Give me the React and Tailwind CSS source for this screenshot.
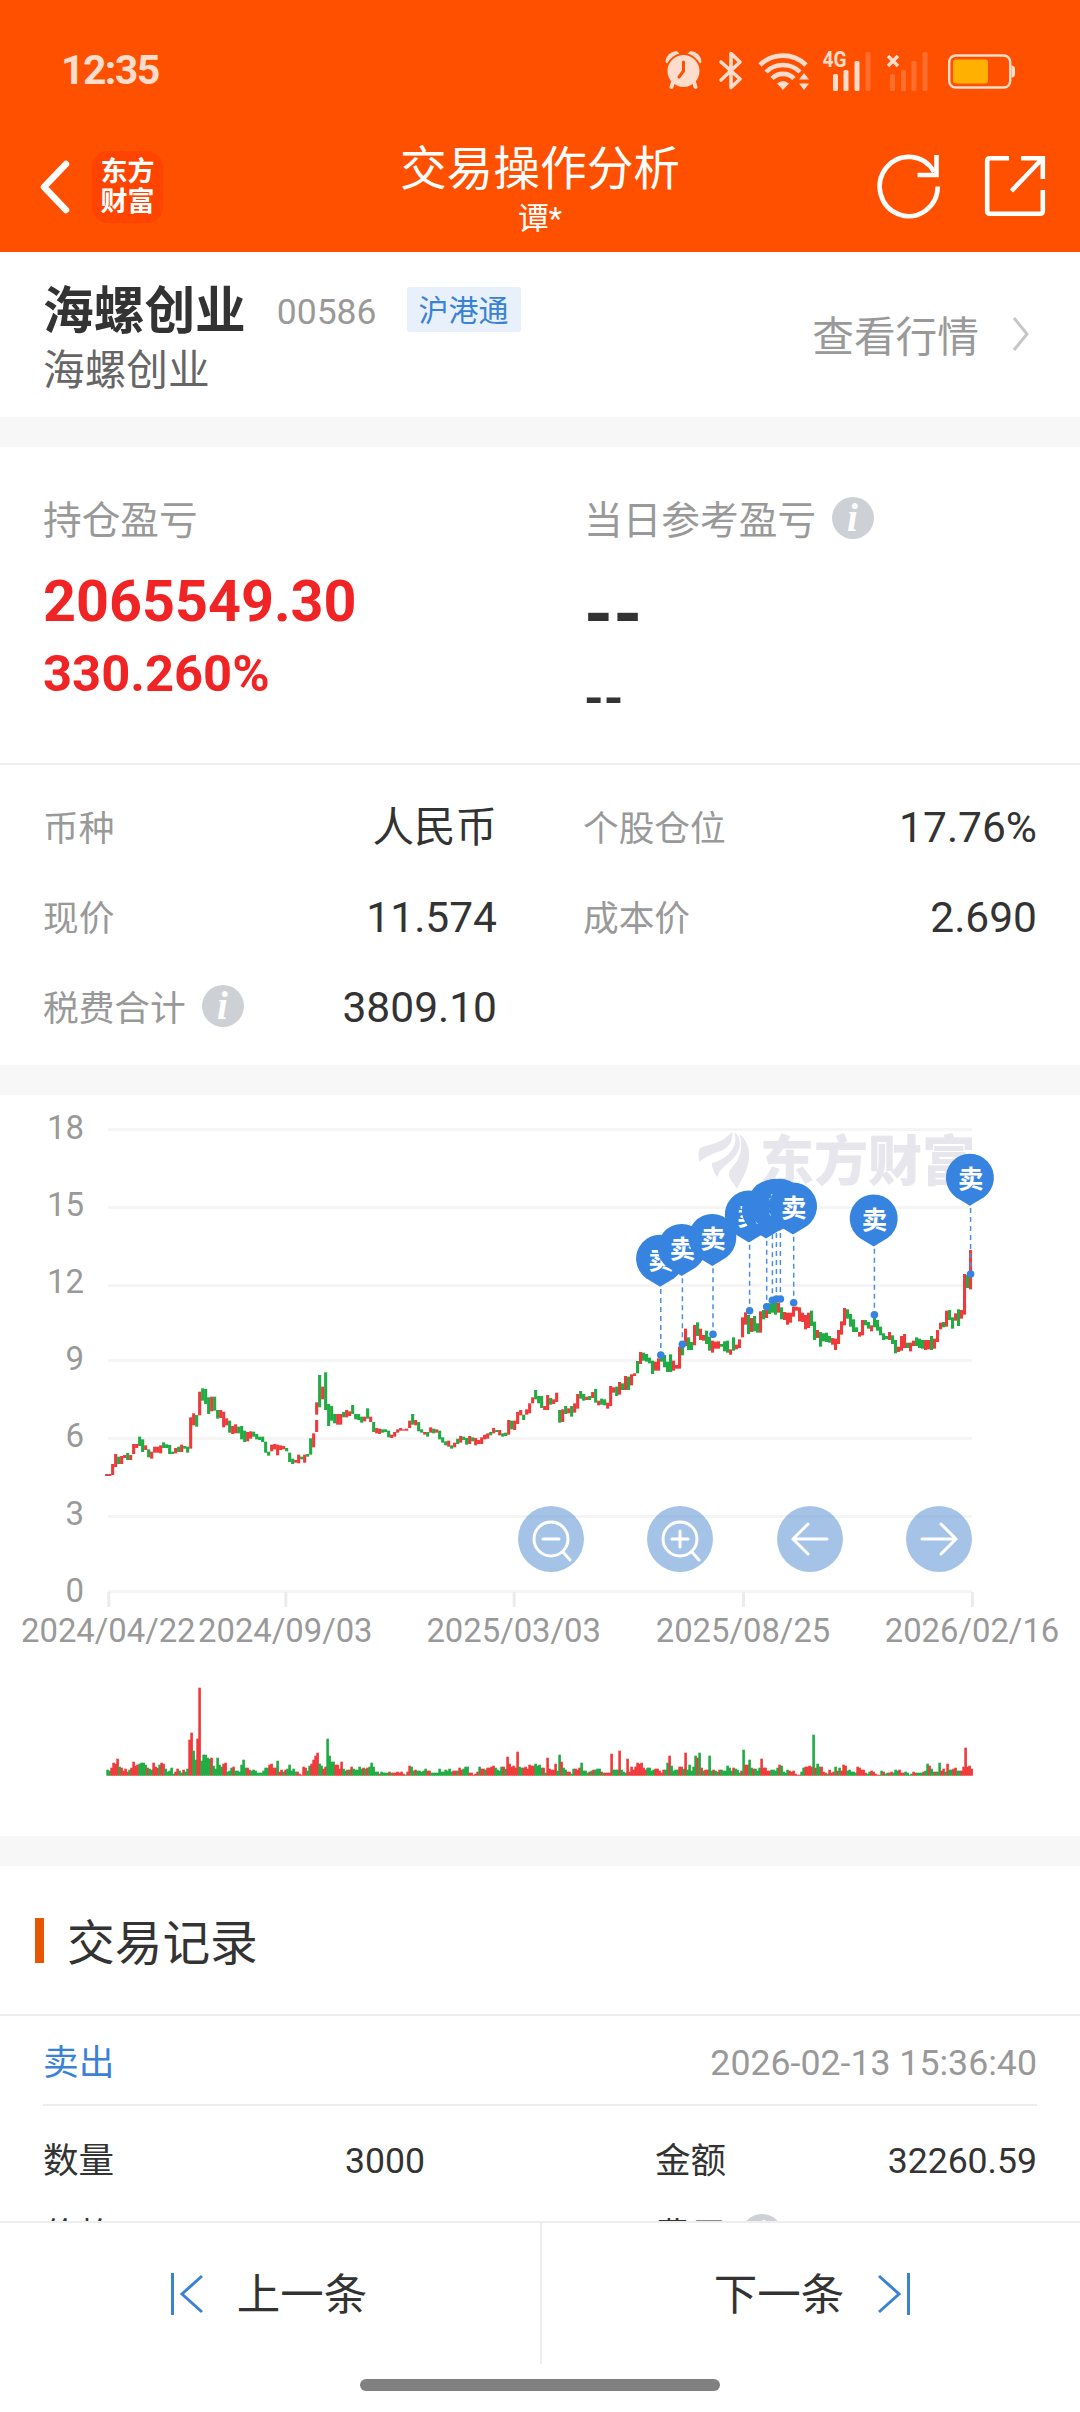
import React from "react";

const RED = "#ef3a3c";
const GREEN = "#20ab43";

/* Daily range bars, three units wide each: colour, top, bottom. */
const EARLY = `r1152-1158 r1152-1158 r1122-1155 r1092-1131 g1100-1122 r1098-1122 r1095-1104 g1089-1110 r1095-1110 r1062-1092
r1062-1074 g1040-1068 g1048-1086 r1066-1080 g1078-1102 r1085-1106 r1070-1088 r1070-1088 r1066-1090 g1057-1074
g1063-1074 g1065-1092 g1085-1092 r1074-1090 g1070-1086 r1064-1086 g1068-1076 g1070-1088 r982-1076 r970-1006
g975-1010 r905-976 g895-932 g897-942 g922-972 r920-964 g920-962 g960-986 r960-984 r965-1012
r985-1006 g992-1028 r1008-1032 r1003-1030 g1010-1030 g1008-1048 g1022-1056 r1026-1054 r1024-1046 g1025-1040
g1032-1048 g1040-1050 g1040-1056 g1055-1088 g1085-1097 r1064-1084 r1062-1078 r1064-1096 r1066-1080 r1068-1078
g1074-1084 g1088-1116 g1106-1122 r1110-1118 r1094-1120 g1100-1108 r1094-1118 g1092-1100 g1045-1094 r1030-1072
r937-974 g855-952 r890-928 g847-960 g942-1008 g948-992 g972-1000 r972-1004 r972-1004 g966-982
r960-982 r964-978 g945-972 g972-988 g972-990 g980-998 r980-994 g955-986 r980-996 g996-1026
r1014-1030 r1016-1032 g1018-1028 g1018-1026 g1022-1042 r1034-1044 r1026-1040 r1018-1028 r1014-1022 r1018-1022
r1016-1022 r992-1014 g972-1004 r990-1006 g996-1024 g1018-1028 r1026-1034 g1026-1040 r1012-1028 g1016-1030
r1018-1028 g1022-1048 g1042-1058 g1054-1066 r1052-1070 g1066-1076 r1058-1072 g1046-1062 r1038-1058 g1040-1050
g1044-1064 r1038-1062 g1042-1054 r1044-1066 r1050-1062 r1042-1062 r1034-1048 r1030-1046 g1026-1036 r1014-1030
g1020-1026 r1020-1036 g1030-1040 g1028-1038 r990-1034 g992-1018 r992-1020 r966-1002 r960-976 g974-990
r958-974 r940-970 r922-940 g900-928 g918-940 g918-954 r948-960 r915-960 g924-944 r928-942
r908-936 g960-998 r958-996 g948-972 r955-970 g948-980 r940-968 r912-956 g903-926 g912-932
r920-930 g918-930 r906-924 g897-938 r932-946 g926-944 g928-946 r938-956 r888-948 r892-908
g890-918`;

const LATE = `r876-914 g880-900 r858-900 g860-900 r853-886 r850-858 g813-850 r786-822 g788-812 g792-815
g803-820 g812-852 r815-842 r805-842 g795-815 g795-832 g815-846 g793-846 r812-842 r825-836
r770-836 g756-796 r716-768 g742-780 g756-780 r705-766 g697-738 r716-750 r735-752 g722-762
g740-782 r752-788 r755-776 r754-776 g762-770 g754-784 g752-788 r778-794 g742-782 r764-778
r748-774 r682-742 r667-704 g675-732 r684-726 g678-724 g700-728 r664-728 g660-688 r648-684
g640-672 g632-668 g630-674 r638-668 g652-688 r666-690 r668-704 r668-698 r650-680 r650-662
r652-694 r668-696 r675-718 r668-714 g662-708 g695-750 r720-744 g726-770 g730-754 g728-756
g738-758 r744-764 r746-780 r720-762 r694-734 r654-706 g658-686 g672-710 g688-726 g712-726
r726-740 r690-736 g690-706 g696-716 r706-724 g680-712 g690-722 g710-736 g730-750 g738-748
r726-750 g736-762 g750-790 r770-786 r738-782 r732-774 g758-774 r758-784 r752-768 g742-768
g746-774 g750-776 r750-780 r750-778 g738-780 r746-776 r720-756 r698-718 g696-712 r662-710
g660-690 g682-716 r670-692 g658-708 r660-686 r552-674 g555-594 r480-598`;

const VOLUME = `g6 g5 r8 r13 r12 r17 g9 r8 r5 r7 r4 g6 r8 r14 r10 r11 g12 g13 g13 g11 r8 g7 g6 r13 r9 r8 g11 r13 r12 g7
g4 g5 g8 g2 r4 r7 g5 g3 r6 g4 g7 r36 r43 g25 g16 r37 r88 g15 g21 g21 g18 g17 r18 g10 g7 g18 g11 g9 r12 r13
g4 g5 g8 r9 g5 g5 g4 g11 g16 g8 r8 r6 g5 g6 g5 g3 g3 g3 g5 g8 g8 r11 r12 r8 r8 g15 r4 r6 g4 r6
g7 g11 g5 g7 g4 r4 r2 r1 r9 r8 g5 g10 r12 r16 r20 r23 g12 g10 r7 r9 g37 g20 g14 g14 r11 r11 r7 r14 g7 g5
r6 g6 r9 g7 g6 g6 g9 g7 r8 g7 r8 g9 g13 g9 g4 g4 r2 g4 g3 g3 g3 r4 g3 r3 r3 r4 r3 r4 r2 g1
r4 r10 g9 g5 r6 g5 g5 g4 g5 g7 r5 r5 g3 g3 g3 g3 g7 g4 g4 g6 g5 g7 g4 r5 r5 g5 r8 r6 g7 g9
g9 r3 r3 r1 r2 r4 g9 r7 r7 g6 r8 r8 r9 r10 g8 g6 g5 g9 r9 g7 r19 r12 r9 r10 r8 r24 g9 g8 r8 r9
r7 r11 r10 r10 g12 g10 g11 g8 r8 g3 r18 r7 r6 r6 r12 g5 g21 r14 g8 g6 r4 r4 g2 g7 r7 r6 r8 g13 g5 g5
g3 r4 g5 r6 g6 g7 g7 r4 g3 r3 r3 r3 r22 g6 g6 g6 r25 g6 g4 g3 r17 r4 r9 r6 r9 r13 r12 r13 r8 r6
g8 g8 g5 g6 r7 r7 r5 r3 r6 g6 g13 r20 g10 g5 g6 g6 r9 r9 g7 r23 g6 g11 g5 g9 g20 r18 g23 r8 g5 r6
r6 g20 g5 r6 g5 g4 r6 g6 g5 g5 g10 g8 g5 r8 g7 g6 g3 r5 g26 r11 r11 g16 g8 r7 g7 g5 g8 r17 r8 r8
r5 r5 g6 g6 g5 g8 r11 g10 g4 g3 g6 r5 r4 r5 r2 r1 r1 g4 g8 r9 r9 r10 r9 g41 r8 g12 g9 r9 r4 r3
g2 r6 r3 r4 g9 r5 g8 r5 r11 r10 g5 g6 g4 g4 g3 r9 r8 r6 r6 r3 g2 g4 r5 r4 r2 r1 r1 g5 r4 g2
g3 r3 r4 g3 g6 g5 r6 r3 r3 g4 g3 g1 g2 r4 r3 g3 g3 g3 r4 g5 g12 r10 g7 g4 r4 g4 g13 r5 r7 g4
r12 g6 g6 r7 r8 g5 g5 r5 r9 r28 r9 r10 r7`;

const parseRange = (text, x0) =>
  text.split(/\s+/).map((t, i) => {
    const [top, bottom] = t.slice(1).split("-").map(Number);
    return { x: x0 + i * 3, y: top / 3 - 5, h: (bottom - top) / 3, c: t[0] === "r" ? RED : GREEN };
  });

const candles = [
  ...parseRange(EARLY, 105.1),
  ...parseRange(LATE, 618),
  { x: 315.1, y: 325, h: 12, c: RED },
];
const volumes = VOLUME.split(/\s+/).map((t, i) => ({
  x: 106.3 + i * 2,
  h: Number(t.slice(1)),
  c: t[0] === "r" ? RED : GREEN,
}));

/* Sell markers: where each trade sits on the price line. */
const SELLS = [
  [660.8, 260], [682.4, 249.3], [713, 239.3], [749.6, 215.7], [766.7, 211.7], [772.4, 205.3],
  [776.4, 204], [780.4, 204], [793.7, 207.7], [874.4, 219.7], [970.6, 179],
];

const GRID = [
  [18, 34.5], [15, 112.5], [12, 190.5], [9, 265.5], [6, 343.5], [3, 421.5], [0, 496.5],
];
const DATES = [
  ["2024/04/22", 108.3], ["2024/09/03", 285.3], ["2025/03/03", 513.7], ["2025/08/25", 743], ["2026/02/16", 972],
];

function Pin({ x, y }) {
  const cx = x - 0.7;
  const cy = y - 95.3;
  return (
    <g>
      <path
        d={`M${cx} ${cy + 27} L${cx - 14} ${cy + 18.5} A24 24 0 1 1 ${cx + 14} ${cy + 18.5} Z`}
        fill="#3783e0"
      />
      <text x={cx + 0.8} y={cy + 9.4} textAnchor="middle" fontSize="25.5" fontWeight="700" fill="#fff">卖</text>
    </g>
  );
}

function Chart() {
  return (
    <svg width="1080" height="741" viewBox="0 0 1080 741" className="block">
      {GRID.map(([v, y], i) => (
        <g key={v}>
          <rect x="108" y={y - 1.5} width="864" height="3" fill="#f5f5f6" />
          <text x="84" y={44 + 77.1 * i} textAnchor="end" fontSize="33" fill="#999">{v}</text>
        </g>
      ))}
      {DATES.map(([d, x]) => (
        <g key={d}>
          <rect x={x - 1} y="497" width="3" height="15" fill="#ececec" />
          <text x={x} y="547" textAnchor="middle" fontSize="32.8" fill="#999">{d}</text>
        </g>
      ))}
      <g fill="#e6e6ec">
        <g transform="translate(580 -5) scale(.33333)">
          <path d="M358 216 L355 188 Q356 170 385 166 Q430 156 457 125 Q460 165 425 182 Q382 194 358 216Z" />
          <path d="M395 220 C440 208 478 172 463 125 C490 150 484 188 448 216 C426 234 416 245 412 262 Q398 244 395 220Z" />
          <path d="M479 132 C502 152 510 180 507 205 C502 250 485 265 471 297 C462 280 444 265 447 250 C450 228 498 210 479 132Z" />
        </g>
        <text x="760" y="85.500" fontSize="54" fontWeight="800" textLength="216">东方财富</text>
      </g>
      <rect x="972" y="30" width="20" height="70" fill="#fff" />
      {candles.map((b, i) => (
        <rect key={i} x={b.x} y={b.y} width="3.1" height={b.h} fill={b.c} />
      ))}
      {SELLS.map(([x, y], i) => (
        <g key={i}>
          <line x1={x} x2={x} y1={y - 66} y2={y} stroke="#4a8fe0" strokeWidth="1.5" strokeDasharray="5 4" />
          <circle cx={x} cy={y} r="3.8" fill="#3783e0" />
        </g>
      ))}
      {SELLS.map(([x, y], i) => (
        <Pin key={i} x={x} y={y} />
      ))}
      {[551, 680, 810, 939].map((x) => (
        <circle key={x} cx={x} cy="444" r="33" fill="#3a7cc8" fillOpacity=".46" />
      ))}
      <g fill="none" stroke="#fff" strokeWidth="3" strokeLinecap="round">
        <circle cx="551" cy="444" r="17" />
        <path d="M563 457l7 8M543 444h16" />
        <circle cx="680" cy="444" r="17" />
        <path d="M692 457l7 8M672 444h16M680 436v16" />
        <path d="M827 444H793M808 429l-15 15l15 15" />
        <path d="M922 444h34M941 429l15 15l-15 15" />
      </g>
      {volumes.map((b, i) => (
        <rect key={i} x={b.x} y={680.7 - b.h} width="2.6" height={b.h} fill={b.c} />
      ))}
    </svg>
  );
}

function Info({ className = "" }) {
  return (
    <svg width="42" height="42" viewBox="0 0 42 42" className={`shrink-0 ${className}`}>
      <circle cx="21" cy="21" r="21" fill="#cdd0d5" />
      <text x="20.500" y="33.500" textAnchor="middle" fontFamily="Liberation Serif, serif" fontStyle="italic" fontWeight="700" fontSize="39" fill="#fff">i</text>
    </svg>
  );
}

function StatusIcons() {
  return (
    <svg width="360" height="50" viewBox="660 45 360 50" fill="#ffdccc">
      <circle cx="683.5" cy="71" r="16" />
      <path d="M665.500 62a11.500 11.500 0 0 1 11-11l3 2.500a22 22 0 0 0-12.500 10zM701.500 62a11.500 11.500 0 0 0-11-11l-3 2.500a22 22 0 0 1 12.500 10z" />
      <path d="M673 82l-1.500 5M694 82l1.500 5" stroke="#ffdccc" strokeWidth="4" strokeLinecap="round" />
      <path d="M683.500 62v9l-4.500 6" fill="none" stroke="#ff5000" strokeWidth="3" strokeLinecap="round" />
      <path d="M721 62l19 17l-9 8.500V53.500l9 8.500l-19 18" fill="none" stroke="#ffdccc" strokeWidth="3.600" strokeLinejoin="round" strokeLinecap="round" />
      <g fill="none" stroke="#ffdccc" strokeWidth="4.600">
        <path d="M760 65a33 33 0 0 1 46 0" />
        <path d="M766 72a24 24 0 0 1 34 0" />
        <path d="M772 78.500a15.500 15.500 0 0 1 22 0" />
      </g>
      <path d="M783 90l-6-6.500q6-5 12 0zM804 73l5 6.500h-10zM804 90l5-6.500h-10z" />
      <text x="822.500" y="67" fontSize="22" fontWeight="700" textLength="24" lengthAdjust="spacingAndGlyphs">4G</text>
      <rect x="833" y="74" width="5" height="17" rx="1.500" />
      <rect x="843.500" y="70" width="5" height="21" rx="1.500" />
      <rect x="854.500" y="61" width="5" height="30" rx="1.500" />
      <g fill="#ff6e2d">
        <rect x="865.500" y="52" width="5" height="39" rx="1.500" />
        <rect x="890" y="74" width="5" height="17" rx="1.500" />
        <rect x="901" y="70" width="5" height="21" rx="1.500" />
        <rect x="911.500" y="61" width="5" height="30" rx="1.500" />
        <rect x="922.500" y="52" width="5" height="39" rx="1.500" />
      </g>
      <path d="M888 56l10 10M898 56l-10 10" stroke="#ffdccc" strokeWidth="3.400" />
      <rect x="949.200" y="55.500" width="61" height="32" rx="6.500" fill="none" stroke="#ffdccc" strokeWidth="2.400" />
      <rect x="953" y="59.500" width="35" height="24" rx="3" fill="#ffb000" />
      <path d="M1011.500 65.500q3.500 0 3.500 3.500v5q0 3.500-3.500 3.500z" />
    </svg>
  );
}

function Header() {
  return (
    <header className="h-[252px] shrink-0 bg-[#ff5000] text-white">
      <div className="flex h-[140px] items-center justify-between pr-[60px] pl-[61px]">
        <span className="text-[41px] leading-none font-bold tracking-[-1.600px] text-[#ffdccc]">12:35</span>
        <StatusIcons />
      </div>
      <div className="grid h-[112px] grid-cols-[1fr_auto_1fr]">
        <div className="flex h-[93px] items-center pl-[38px]">
          <svg width="34" height="54" viewBox="0 0 34 54" fill="none" stroke="#fff" strokeWidth="6.500" strokeLinecap="round" strokeLinejoin="round">
            <path d="M28 4L6 27l22 23" />
          </svg>
          <div className="ml-5 flex h-[72px] w-[71px] flex-col items-center justify-center rounded-2xl bg-[#ff4400] pt-[1px] text-[27px] leading-[30px] font-bold">
            <span>东方</span>
            <span>财富</span>
          </div>
        </div>
        <div className="flex flex-col items-center pt-[2px]">
          <h1 className="text-[46.700px] leading-[54px]">交易操作分析</h1>
          <p className="mt-[5px] text-[31px] leading-[36px]">谭*</p>
        </div>
        <div className="flex h-[91px] items-center justify-end pr-[35px]">
          <svg width="170" height="66" viewBox="875 153 170 66" className="overflow-visible" fill="none" stroke="#fff" strokeWidth="4.600">
            <path d="M937.700 186.500A29 29.600 0 1 1 934 172" />
            <path d="M936.500 155v20h-19" />
            <path d="M1009 158.300H990q-2.800 0-2.800 2.800V211q0 2.800 2.800 2.800h50q2.800 0 2.800-2.800V190M1021 158.300h21.800V179M1042 159L1011.500 191" />
          </svg>
        </div>
      </div>
    </header>
  );
}

function Field({ label, value, info }) {
  return (
    <div className="flex h-[90px] items-center justify-between">
      <span className="flex items-center pt-[3px] text-[35.700px] text-[#999]">
        {label}
        {info && <Info className="mb-[6px] ml-4" />}
      </span>
      <span className="text-[42.500px] text-[#333]">{value}</span>
    </div>
  );
}

export default function App() {
  return (
    <div className="flex h-[2412px] w-[1080px] flex-col overflow-hidden bg-white font-['Roboto','Noto_Sans_CJK_SC',sans-serif] text-[#333]">
      <Header />

      <section className="flex h-[165px] shrink-0 items-center justify-between pr-[49px] pl-[43px]">
        <div className="flex flex-col pt-[11px]">
          <div className="flex items-center">
            <h2 className="text-[50.700px] leading-[60px] font-bold">海螺创业</h2>
            <span className="ml-[31px] text-[35.500px] leading-[58px] text-[#999]">00586</span>
            <span className="mb-[5px] ml-[30px] flex h-[45px] items-center rounded-[3px] bg-[#e8f1fb] px-3 pt-[3px] text-[30px] leading-none text-[#3a82d6]">沪港通</span>
          </div>
          <p className="text-[41.700px] leading-[57px] text-[#666]">海螺创业</p>
        </div>
        <div className="flex items-center text-[41.700px] text-[#999]">
          <span className="pt-[7px]">查看行情</span>
          <svg width="20" height="36" viewBox="0 0 20 36" className="ml-[32px]" fill="none" stroke="#c6c6c6" strokeWidth="3">
            <path d="M3 2l13 16L3 34" />
          </svg>
        </div>
      </section>

      <div className="h-[30px] shrink-0 bg-[#f7f7f7]" />

      <section className="grid h-[318px] shrink-0 grid-cols-2 border-b-2 border-[#eee]">
        <div className="flex flex-col pt-[45px] pl-[43px]">
          <div className="text-[38.700px] leading-[58px] text-[#999]">持仓盈亏</div>
          <div className="mt-[17px] text-[57.500px] leading-[70px] font-bold text-[#f02424]">2065549.30</div>
          <div className="text-[50.700px] leading-[74px] font-bold text-[#f02424]">330.260%</div>
        </div>
        <div className="flex flex-col pt-[45px] pl-[44px]">
          <div className="flex items-center text-[38.700px] leading-[58px] text-[#999]">
            当日参考盈亏
            <Info className="mb-[6px] ml-4" />
          </div>
          <div className="mt-[30px] text-[74px] leading-[70px] font-bold">--</div>
          <div className="mt-[12px] text-[50px] leading-[74px] font-bold">--</div>
        </div>
      </section>

      <section className="grid h-[300px] shrink-0 grid-cols-[454px_454px] content-start gap-x-[86px] pt-[18px] pl-[43px]">
        <Field label="币种" value={<span className="text-[41.500px]">人民币</span>} />
        <Field label="个股仓位" value="17.76%" />
        <Field label="现价" value="11.574" />
        <Field label="成本价" value="2.690" />
        <Field label="税费合计" value="3809.10" info />
      </section>

      <div className="h-[30px] shrink-0 bg-[#f7f7f7]" />

      <Chart />

      <div className="h-[30px] shrink-0 bg-[#f7f7f7]" />

      <section className="h-[355px] shrink-0 overflow-hidden">
        <div className="flex h-[150px] items-center border-b-2 border-[#eee] pl-[35px]">
          <span className="h-[45px] w-[9px] bg-[#e85604]" />
          <h3 className="ml-[23px] pt-[9px] text-[47.700px] leading-none">交易记录</h3>
        </div>
        <div className="mx-[43px] flex h-[90px] items-center justify-between border-b-2 border-[#eee] pt-[7px] text-[35.700px]">
          <span className="text-[#3a82d6]">卖出</span>
          <span className="text-[#999]">2026-02-13 15:36:40</span>
        </div>
        <div className="mx-[43px] grid grid-cols-[382px_230px_382px] pt-[16px] text-[35.600px] leading-[78px]">
          <div className="flex justify-between"><span>数量</span><span>3000</span></div>
          <div />
          <div className="flex justify-between"><span>金额</span><span>32260.59</span></div>
          <div className="-mt-[3px] flex"><span>价格</span></div>
          <div />
          <div className="-mt-[3px] flex items-center"><span>费用</span><Info className="mb-[2px] ml-[15px]" /></div>
        </div>
      </section>

      <nav className="h-[191px] shrink-0 border-t-2 border-[#eee] bg-white text-[43.500px]">
        <div className="grid h-[141px] grid-cols-[542px_538px]">
          <div className="flex items-center justify-center border-r-2 border-[#eee] pr-[4px]">
            <svg width="36" height="44" viewBox="0 0 36 44" fill="none" stroke="#3a82d6" strokeWidth="3">
              <path d="M3.500 1v42M33 4L13 22l20 18" />
            </svg>
            <span className="ml-8 pt-[5px]">上一条</span>
          </div>
          <div className="flex items-center justify-center pl-[4px]">
            <span className="mr-8 pt-[5px]">下一条</span>
            <svg width="36" height="44" viewBox="0 0 36 44" fill="none" stroke="#3a82d6" strokeWidth="3">
              <path d="M32.500 1v42M3 4l20 18L3 40" />
            </svg>
          </div>
        </div>
        <div className="mx-auto mt-[15px] h-3 w-[360px] rounded-full bg-[#808080]" />
      </nav>
    </div>
  );
}
